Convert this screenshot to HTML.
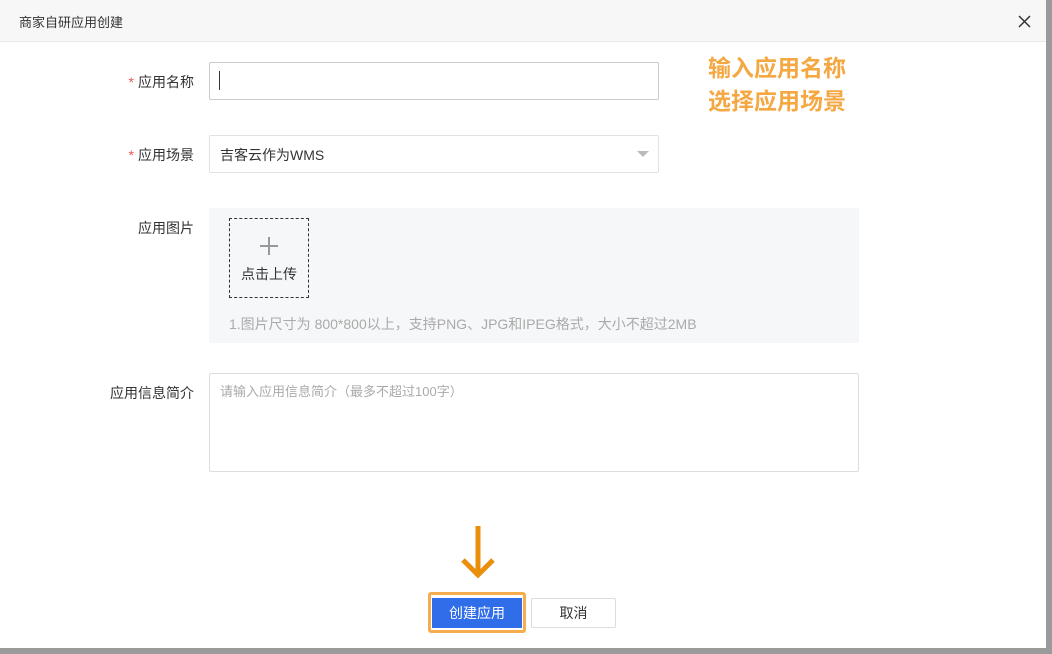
<!DOCTYPE html>
<html><head><meta charset="utf-8"><style>
*{box-sizing:border-box;margin:0;padding:0}
body{width:1052px;height:654px;overflow:hidden;background:#fff;font-family:"Liberation Sans","Noto Sans CJK SC",sans-serif;font-size:13px;color:#333;position:relative}
.a{position:absolute}
.lbl{position:absolute;right:858px;font-size:14px;color:#333;white-space:nowrap}
.lbl i{color:#e55;font-style:normal;margin-right:4px}
</style></head><body>
<div class="a" style="left:0;top:0;width:1046px;height:42px;background:#f7f7f7;border-bottom:1px solid #e8e8e8"></div>
<div class="a" style="left:19px;top:12px;font-size:13px;color:#333">商家自研应用创建</div>
<svg class="a" style="left:1018px;top:15px" width="13" height="13" viewBox="0 0 13 13"><path d="M1 1L12 12M12 1L1 12" stroke="#333" stroke-width="1.5"/></svg>
<div class="a" style="left:1046px;top:0;width:6px;height:654px;background:#9a9a9a"></div>
<div class="a" style="left:0;top:648px;width:1052px;height:6px;background:#9a9a9a"></div>

<div class="lbl" style="top:72px"><i>*</i>应用名称</div>
<div class="a" style="left:209px;top:62px;width:450px;height:38px;border:1px solid #ccc;border-radius:2px"></div>
<div class="a" style="left:219px;top:71px;width:1px;height:19px;background:#333"></div>

<div class="a" style="left:708px;top:52px;font-size:23px;font-weight:bold;color:#f5a742;line-height:33px">输入应用名称<br>选择应用场景</div>

<div class="lbl" style="top:145px"><i>*</i>应用场景</div>
<div class="a" style="left:209px;top:135px;width:450px;height:38px;border:1px solid #e2e2e2;border-radius:2px"></div>
<div class="a" style="left:220px;top:145px;font-size:14px;color:#333">吉客云作为WMS</div>
<div class="a" style="left:637px;top:151px;width:0;height:0;border-left:6px solid transparent;border-right:6px solid transparent;border-top:6px solid #bbb"></div>

<div class="lbl" style="top:218px">应用图片</div>
<div class="a" style="left:209px;top:208px;width:650px;height:135px;background:#f6f7f9"></div>
<div class="a" style="left:229px;top:218px;width:80px;height:80px;border:1px dashed #333"></div>
<div class="a" style="left:260px;top:237px;width:18px;height:18px">
<div class="a" style="left:8px;top:0;width:2px;height:18px;background:#999"></div>
<div class="a" style="left:0;top:8px;width:18px;height:2px;background:#999"></div></div>
<div class="a" style="left:241px;top:264px;font-size:14px;color:#333">点击上传</div>
<div class="a" style="left:229px;top:314px;font-size:14px;color:#aaa">1.图片尺寸为 800*800以上，支持PNG、JPG和IPEG格式，大小不超过2MB</div>

<div class="lbl" style="top:383px">应用信息简介</div>
<div class="a" style="left:209px;top:373px;width:650px;height:99px;border:1px solid #ddd;border-radius:2px"></div>
<div class="a" style="left:220px;top:381px;font-size:13px;color:#aaa">请输入应用信息简介（最多不超过100字）</div>

<svg class="a" style="left:450px;top:520px" width="56" height="64" viewBox="0 0 56 64">
<path d="M28 6 V54 M13 40 L28 55 L43 40" stroke="#fff" stroke-width="10" fill="none"/>
<path d="M28 6 V54 M13 40 L28 55 L43 40" stroke="#ea8f0c" stroke-width="5" fill="none"/></svg>

<div class="a" style="left:428px;top:592px;width:98px;height:41px;border:3px solid #f5ad4e;border-radius:3px;background:#fff"></div>
<div class="a" style="left:432px;top:598px;width:90px;height:30px;background:#2f6ee8;color:#fff;font-size:14px;text-align:center;line-height:30px">创建应用</div>
<div class="a" style="left:531px;top:598px;width:85px;height:30px;border:1px solid #ddd;border-radius:2px;text-align:center;line-height:28px;font-size:14px;color:#333">取消</div>
</body></html>
